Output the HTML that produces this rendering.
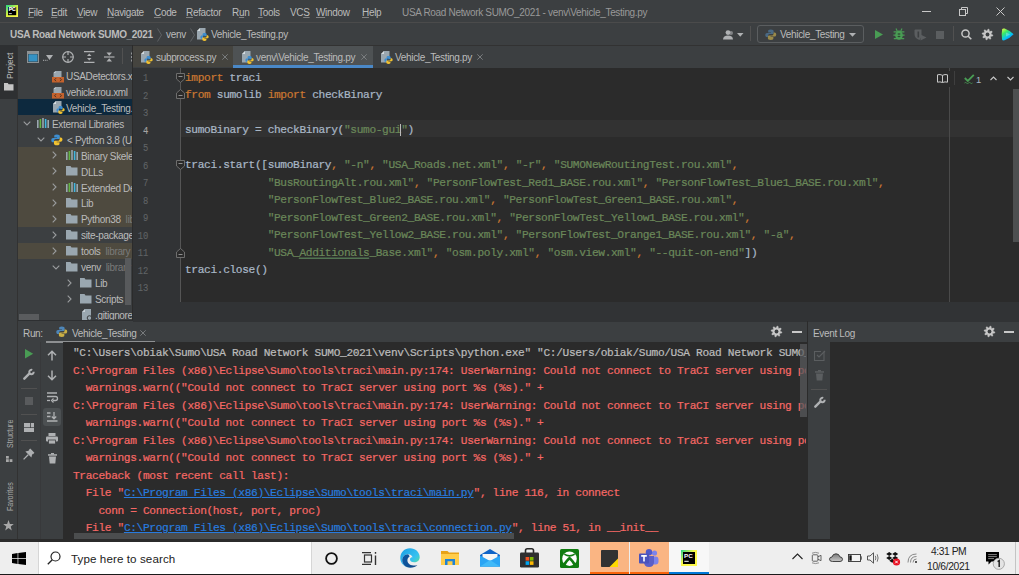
<!DOCTYPE html>
<html><head><meta charset="utf-8"><style>
*{box-sizing:border-box}
html,body{margin:0;padding:0}
body{width:1019px;height:575px;overflow:hidden;position:relative;background:#3C3F41;font-family:"Liberation Sans",sans-serif;}
.a{position:absolute}
svg.a{overflow:visible}
.t{position:absolute;white-space:pre;line-height:10px}
.ui{font-size:10px;color:#BBBBBB;font-family:"Liberation Sans",sans-serif;letter-spacing:-0.33px}
.m{font-family:"Liberation Mono",monospace;font-size:11.2px;letter-spacing:-0.356px;white-space:pre;-webkit-text-stroke:0.22px currentColor}
.k{color:#CC7832}
.s{color:#6A8759}
.d{color:#A9B7C6}
.er{color:#F56865}
.lk{color:#287BDE;text-decoration:underline}
u{text-decoration:underline;text-decoration-color:rgba(187,187,187,0.55);text-underline-offset:1px}
</style></head><body>
<div class="a" style="left:0px;top:22px;width:1019px;height:1px;background:#4B4B4B;"></div>
<svg class="a" style="left:6px;top:5px;" width="12" height="12" viewBox="0 0 12 12"><defs><linearGradient id="pcg" x1="0" y1="0" x2="0.8" y2="1"><stop offset="0" stop-color="#21D789"/><stop offset="0.55" stop-color="#D8F03C"/><stop offset="1" stop-color="#FCF84A"/></linearGradient></defs><rect x="0" y="0" width="12" height="12" fill="url(#pcg)"/><rect x="2" y="2" width="8.2" height="8.2" fill="#000"/><text x="2.7" y="6.3" font-family="Liberation Sans" font-weight="bold" font-size="5" fill="#fff" stroke="#fff" stroke-width="0.2">PC</text><rect x="2.8" y="8.3" width="3" height="0.8" fill="#fff"/></svg>
<div class="t ui" style="left:28px;top:8px;"><u>F</u>ile</div>
<div class="t ui" style="left:51px;top:8px;"><u>E</u>dit</div>
<div class="t ui" style="left:77px;top:8px;"><u>V</u>iew</div>
<div class="t ui" style="left:107px;top:8px;"><u>N</u>avigate</div>
<div class="t ui" style="left:154px;top:8px;"><u>C</u>ode</div>
<div class="t ui" style="left:186px;top:8px;"><u>R</u>efactor</div>
<div class="t ui" style="left:232px;top:8px;">R<u>u</u>n</div>
<div class="t ui" style="left:258px;top:8px;"><u>T</u>ools</div>
<div class="t ui" style="left:290px;top:8px;">VC<u>S</u></div>
<div class="t ui" style="left:316px;top:8px;"><u>W</u>indow</div>
<div class="t ui" style="left:362px;top:8px;"><u>H</u>elp</div>
<div class="t ui" style="left:402px;top:8px;color:#999999">USA Road Network SUMO_2021 - venv\Vehicle_Testing.py</div>
<div class="a" style="left:922px;top:11px;width:9px;height:1px;background:#C8C8C8;"></div>
<svg class="a" style="left:959px;top:7px;" width="9" height="9" viewBox="0 0 9 9"><rect x="0.5" y="2.5" width="6" height="6" fill="none" stroke="#C8C8C8"/><path d="M2.5 2.5V0.5H8.5V6.5H6.5" fill="none" stroke="#C8C8C8"/></svg>
<svg class="a" style="left:996px;top:7px;" width="9" height="9" viewBox="0 0 9 9"><path d="M0.5 0.5L8.5 8.5M8.5 0.5L0.5 8.5" stroke="#C8C8C8" stroke-width="1"/></svg>
<div class="t ui" style="left:10px;top:30px;font-weight:bold">USA Road Network SUMO_2021</div>
<svg class="a" style="left:157px;top:28px;" width="5" height="14" viewBox="0 0 5 14"><path d="M0.5 0.5L4.5 7L0.5 13.5" stroke="#5E6164" fill="none"/></svg>
<div class="t ui" style="left:166px;top:30px;">venv</div>
<svg class="a" style="left:190px;top:28px;" width="5" height="14" viewBox="0 0 5 14"><path d="M0.5 0.5L4.5 7L0.5 13.5" stroke="#5E6164" fill="none"/></svg>
<svg class="a" style="left:197px;top:28px;" width="12" height="13" viewBox="0 0 12 13"><path d="M3 0H8.5V6H6V11.5H0V3Z" fill="#9AA7B0"/><path d="M0 3L3 0V3Z" fill="#D5DCE0"/><g transform="translate(3.2,4.6) scale(0.72)"><path d="M6 0.5C3.6 0.5 3.3 1.3 3.3 2.3V3.6H6.2V4.1H2.1C1 4.1 0.3 5 0.3 6.3C0.3 7.7 1 8.4 2.1 8.4H3.1V7C3.1 5.9 4 5.1 5 5.1H7.7C8.5 5.1 9 4.6 9 3.8V2.3C9 1.3 8.2 0.5 6 0.5Z" fill="#3D8ED0"/><path d="M6 11.5C8.4 11.5 8.7 10.7 8.7 9.7V8.4H5.8V7.9H9.9C11 7.9 11.7 7 11.7 5.7C11.7 4.3 11 3.6 9.9 3.6H8.9V5C8.9 6.1 8 6.9 7 6.9H4.3C3.5 6.9 3 7.4 3 8.2V9.7C3 10.7 3.8 11.5 6 11.5Z" fill="#F2C230"/></g></svg>
<div class="t ui" style="left:211px;top:30px;">Vehicle_Testing.py</div>
<svg class="a" style="left:723px;top:30px;" width="12" height="10" viewBox="0 0 12 10"><circle cx="5" cy="2.6" r="2.4" fill="#AFB1B3"/><path d="M0 9.5C0 6.5 2 5.4 5 5.4C8 5.4 10 6.5 10 9.5Z" fill="#AFB1B3"/><circle cx="8" cy="3" r="2" fill="#AFB1B3" opacity="0.6"/></svg>
<svg class="a" style="left:737px;top:33px;" width="7" height="4" viewBox="0 0 7 4"><path d="M0 0H6.5L3.25 3.7Z" fill="#AFB1B3"/></svg>
<div class="a" style="left:750px;top:26px;width:1px;height:15px;background:#515151;"></div>
<div class="a" style="left:757px;top:25px;width:107px;height:18px;border:1px solid #5B5E60;border-radius:3px"></div>
<svg class="a" style="left:765px;top:29px;" width="12" height="12" viewBox="0 0 12 12"><g transform="scale(0.96)"><path d="M6 0.5C3.6 0.5 3.3 1.3 3.3 2.3V3.6H6.2V4.1H2.1C1 4.1 0.3 5 0.3 6.3C0.3 7.7 1 8.4 2.1 8.4H3.1V7C3.1 5.9 4 5.1 5 5.1H7.7C8.5 5.1 9 4.6 9 3.8V2.3C9 1.3 8.2 0.5 6 0.5Z" fill="#4A6A85"/><path d="M6 11.5C8.4 11.5 8.7 10.7 8.7 9.7V8.4H5.8V7.9H9.9C11 7.9 11.7 7 11.7 5.7C11.7 4.3 11 3.6 9.9 3.6H8.9V5C8.9 6.1 8 6.9 7 6.9H4.3C3.5 6.9 3 7.4 3 8.2V9.7C3 10.7 3.8 11.5 6 11.5Z" fill="#9A8A4A"/></g></svg>
<div class="t ui" style="left:780px;top:30px;">Vehicle_Testing</div>
<svg class="a" style="left:849px;top:33px;" width="7" height="4" viewBox="0 0 7 4"><path d="M0 0H7L3.5 3.8Z" fill="#AFB1B3"/></svg>
<svg class="a" style="left:875px;top:30px;" width="8" height="9" viewBox="0 0 8 9"><path d="M0 0L8 4.5L0 9Z" fill="#499C54"/></svg>
<svg class="a" style="left:893px;top:28px;" width="12" height="13" viewBox="0 0 12 13"><path d="M4.2 3L3 0.6M7.8 3L9 0.6" stroke="#499C54" stroke-width="1.2"/><path d="M0.6 3.8H11.4M0.4 7.2H11.6M0.8 10.6H11.2" stroke="#499C54" stroke-width="1.3"/><ellipse cx="6" cy="7.2" rx="3.8" ry="4.6" fill="#499C54"/><ellipse cx="6" cy="6" rx="1.5" ry="0.75" fill="#2F4A33"/><ellipse cx="6" cy="8.6" rx="1.5" ry="0.75" fill="#2F4A33"/></svg>
<svg class="a" style="left:914px;top:29px;" width="13" height="12" viewBox="0 0 13 12"><path d="M1.5 0.5H7.5V7.5L5.5 11Q0.5 9.5 0.5 5V1.5Q0.5 0.5 1.5 0.5Z" fill="#5B5E60"/><rect x="3.5" y="2.5" width="1.6" height="6" fill="#3C3F41"/><path d="M6.5 5.5L12.5 8.5L6.5 11.5Z" fill="#5B5E60"/></svg>
<div class="a" style="left:936px;top:31px;width:8px;height:8px;background:#5B5E60;"></div>
<div class="a" style="left:953px;top:26px;width:1px;height:15px;background:#515151;"></div>
<svg class="a" style="left:961px;top:29px;" width="11" height="11" viewBox="0 0 11 11"><circle cx="4.5" cy="4.5" r="3.6" stroke="#C8C8C8" stroke-width="1.5" fill="none"/><path d="M7.2 7.2L10.3 10.3" stroke="#C8C8C8" stroke-width="1.6"/></svg>
<svg class="a" style="left:982px;top:29px;" width="11" height="11" viewBox="0 0 11 11"><polygon points="10.87,6.03 10.67,7.07 8.83,7.28 8.42,7.90 8.93,9.67 8.05,10.26 6.60,9.12 5.87,9.26 4.97,10.87 3.93,10.67 3.72,8.83 3.10,8.42 1.33,8.93 0.74,8.05 1.88,6.60 1.74,5.87 0.13,4.97 0.33,3.93 2.17,3.72 2.58,3.10 2.07,1.33 2.95,0.74 4.40,1.88 5.13,1.74 6.03,0.13 7.07,0.33 7.28,2.17 7.90,2.58 9.67,2.07 10.26,2.95 9.12,4.40 9.26,5.13" fill="#C8C8C8" stroke="#C8C8C8" stroke-width="0.5" stroke-linejoin="round"/><circle cx="5.5" cy="5.5" r="1.9" fill="#3C3F41"/></svg>
<svg class="a" style="left:1001px;top:28px;" width="13" height="13" viewBox="0 0 13 13"><defs><linearGradient id="jbg" x1="0" y1="0" x2="0.7" y2="1"><stop offset="0" stop-color="#FCF84A"/><stop offset="0.35" stop-color="#3DEA62"/><stop offset="0.7" stop-color="#07C3F2"/><stop offset="1" stop-color="#087CFA"/></linearGradient></defs><path d="M1.2 1.6Q1.6 0 3.6 0.6Q9 2.6 12.6 6.3Q9 10.4 3.6 12.3Q1.4 12.9 1 11.2Q0.2 6.4 1.2 1.6Z" fill="url(#jbg)"/><path d="M5 4.6L9.2 6.4L5 8.4Z" fill="#DFFBFF" opacity="0.3"/></svg>
<div class="a" style="left:0px;top:45px;width:17px;height:494px;background:#3C3F41;"></div>
<div class="a" style="left:0px;top:45px;width:17px;height:54px;background:#2E3032;"></div>
<div class="a" style="left:17px;top:45px;width:1px;height:494px;background:#323232;"></div>
<div class="t ui" style="left:4.5px;top:79px;transform-origin:0 0;transform:rotate(-90deg);font-size:8.5px;letter-spacing:0px;color:#BBBBBB">Project</div>
<svg class="a" style="left:4px;top:83px;" width="10" height="8" viewBox="0 0 10 8"><path d="M0 0H3.8L4.6 1.2H9.5V7.5H0Z" fill="#C5C5C5"/></svg>
<div class="t ui" style="left:4.5px;top:448px;transform-origin:0 0;transform:rotate(-90deg) scaleX(0.82);font-size:8.5px;letter-spacing:0px;color:#A8A8A8">Structure</div>
<svg class="a" style="left:6px;top:456px;" width="7" height="6" viewBox="0 0 7 6"><rect x="0" y="3.2" width="2.8" height="2.8" fill="#A8A8A8"/><rect x="3.6" y="3.2" width="2.8" height="2.8" fill="#A8A8A8"/><rect x="0" y="0" width="2.8" height="2.6" fill="#A8A8A8"/></svg>
<div class="t ui" style="left:4.5px;top:511px;transform-origin:0 0;transform:rotate(-90deg) scaleX(0.82);font-size:8.5px;letter-spacing:0px;color:#A8A8A8">Favorites</div>
<svg class="a" style="left:3px;top:520px;" width="11" height="11" viewBox="0 0 11 11"><path d="M5.5 0L6.9 3.9L10.8 4L7.7 6.5L8.8 10.4L5.5 8.1L2.2 10.4L3.3 6.5L0.2 4L4.1 3.9Z" fill="#A8A8A8"/></svg>
<div class="a" style="left:18px;top:45px;width:114px;height:1px;background:#323232;"></div>
<div class="a" style="left:132px;top:45px;width:1px;height:276px;background:#2B2B2B;"></div>
<div class="a" style="left:18px;top:46px;width:114px;height:275px;overflow:hidden"><div class="a" style="left:-18px;top:-46px;width:1019px;height:575px">
<svg class="a" style="left:27px;top:51px;" width="13" height="12" viewBox="0 0 13 12"><rect x="0.5" y="0.5" width="11" height="11" fill="none" stroke="#8C9194"/><rect x="1" y="1" width="10" height="2" fill="#8C9194"/><rect x="1.5" y="3.3" width="9" height="7.2" fill="#3592C4"/></svg>
<svg class="a" style="left:43px;top:55px;" width="10" height="6" viewBox="0 0 10 6"><path d="M3 0H10L6.5 5Z" fill="#AFB1B3"/><rect x="0" y="4.8" width="1" height="1" fill="#AFB1B3"/><rect x="1.8" y="4.8" width="1" height="1" fill="#AFB1B3"/><rect x="3.6" y="4.8" width="1" height="1" fill="#AFB1B3"/></svg>
<svg class="a" style="left:62px;top:51px;" width="12" height="12" viewBox="0 0 12 12"><circle cx="6" cy="6" r="5.3" stroke="#AFB1B3" stroke-width="1.2" fill="none"/><path d="M6 0.5V4M6 8V11.5M0.5 6H4M8 6H11.5" stroke="#AFB1B3" stroke-width="1.2"/></svg>
<svg class="a" style="left:84px;top:51px;" width="11" height="12" viewBox="0 0 11 12"><path d="M0 0.6H10.5M0 11.4H10.5" stroke="#AFB1B3" stroke-width="1.2"/><path d="M5.25 2.5L7.5 5H3Z M5.25 9.5L7.5 7H3Z" fill="#AFB1B3"/></svg>
<svg class="a" style="left:104px;top:52px;" width="11" height="10" viewBox="0 0 11 10"><path d="M0 5H10.5" stroke="#AFB1B3" stroke-width="1.2"/><path d="M5.25 3.8L8 0.6H2.5Z M5.25 6.2L8 9.4H2.5Z" fill="#AFB1B3"/></svg>
<div class="a" style="left:122px;top:48px;width:1px;height:16px;background:#515151;"></div>
<svg class="a" style="left:129px;top:52px;" width="4" height="10" viewBox="0 0 4 10"><path d="M3 0.5V9.5" stroke="#AFB1B3" stroke-width="1.5" stroke-dasharray="2 1.5"/></svg>
<div class="a" style="left:18px;top:99px;width:114px;height:16px;background:#0D293E;"></div>
<div class="a" style="left:18px;top:147px;width:114px;height:80px;background:#4E4A3F;"></div>
<div class="a" style="left:18px;top:243px;width:114px;height:16px;background:#4E4A3F;"></div>
<svg class="a" style="left:52px;top:71px;" width="12" height="12" viewBox="0 0 12 12"><path d="M3.5 0H9.5V6H1.5V2Z" fill="#9AA7B0"/><path d="M1.5 2L3.5 0V2Z" fill="#C8D0D6"/><rect x="0" y="6" width="12" height="5.5" fill="#C4622D"/><path d="M4 7.2L2.6 8.7L4 10.2M8 7.2L9.4 8.7L8 10.2" stroke="#3A2A20" stroke-width="0.9" fill="none"/></svg>
<div class="t ui" style="left:66px;top:72px;">USADetectors.xml</div>
<svg class="a" style="left:52px;top:87px;" width="12" height="12" viewBox="0 0 12 12"><path d="M3.5 0H9.5V6H1.5V2Z" fill="#9AA7B0"/><path d="M1.5 2L3.5 0V2Z" fill="#C8D0D6"/><rect x="0" y="6" width="12" height="5.5" fill="#C4622D"/><path d="M4 7.2L2.6 8.7L4 10.2M8 7.2L9.4 8.7L8 10.2" stroke="#3A2A20" stroke-width="0.9" fill="none"/></svg>
<div class="t ui" style="left:66px;top:88px;">vehicle.rou.xml</div>
<svg class="a" style="left:53px;top:101px;" width="12" height="13" viewBox="0 0 12 13"><path d="M3 0H8.5V6H6V11.5H0V3Z" fill="#9AA7B0"/><path d="M0 3L3 0V3Z" fill="#D5DCE0"/><g transform="translate(3.2,4.6) scale(0.72)"><path d="M6 0.5C3.6 0.5 3.3 1.3 3.3 2.3V3.6H6.2V4.1H2.1C1 4.1 0.3 5 0.3 6.3C0.3 7.7 1 8.4 2.1 8.4H3.1V7C3.1 5.9 4 5.1 5 5.1H7.7C8.5 5.1 9 4.6 9 3.8V2.3C9 1.3 8.2 0.5 6 0.5Z" fill="#3D8ED0"/><path d="M6 11.5C8.4 11.5 8.7 10.7 8.7 9.7V8.4H5.8V7.9H9.9C11 7.9 11.7 7 11.7 5.7C11.7 4.3 11 3.6 9.9 3.6H8.9V5C8.9 6.1 8 6.9 7 6.9H4.3C3.5 6.9 3 7.4 3 8.2V9.7C3 10.7 3.8 11.5 6 11.5Z" fill="#F2C230"/></g></svg>
<div class="t ui" style="left:66px;top:104px;">Vehicle_Testing.py</div>
<svg class="a" style="left:23px;top:121px;" width="8" height="5" viewBox="0 0 8 5"><path d="M0.7 0.7L4 4L7.3 0.7" stroke="#9A9C9E" stroke-width="1.1" fill="none"/></svg>
<svg class="a" style="left:37px;top:118px;" width="12" height="10" viewBox="0 0 12 10"><rect x="0" y="2" width="1.6" height="8" fill="#9AA7B0"/><rect x="2.6" y="1" width="1.6" height="9" fill="#62B543"/><rect x="5.2" y="0" width="1.6" height="10" fill="#9AA7B0"/><rect x="7.8" y="1" width="1.6" height="9" fill="#40B6E0"/><rect x="10.4" y="2" width="1.6" height="8" fill="#9AA7B0"/></svg>
<div class="t ui" style="left:52px;top:120px;">External Libraries</div>
<svg class="a" style="left:37px;top:137px;" width="8" height="5" viewBox="0 0 8 5"><path d="M0.7 0.7L4 4L7.3 0.7" stroke="#9A9C9E" stroke-width="1.1" fill="none"/></svg>
<svg class="a" style="left:51px;top:134px;" width="12" height="12" viewBox="0 0 12 12"><g transform="scale(0.98)"><path d="M6 0.5C3.6 0.5 3.3 1.3 3.3 2.3V3.6H6.2V4.1H2.1C1 4.1 0.3 5 0.3 6.3C0.3 7.7 1 8.4 2.1 8.4H3.1V7C3.1 5.9 4 5.1 5 5.1H7.7C8.5 5.1 9 4.6 9 3.8V2.3C9 1.3 8.2 0.5 6 0.5Z" fill="#3D8ED0"/><path d="M6 11.5C8.4 11.5 8.7 10.7 8.7 9.7V8.4H5.8V7.9H9.9C11 7.9 11.7 7 11.7 5.7C11.7 4.3 11 3.6 9.9 3.6H8.9V5C8.9 6.1 8 6.9 7 6.9H4.3C3.5 6.9 3 7.4 3 8.2V9.7C3 10.7 3.8 11.5 6 11.5Z" fill="#F2C230"/></g></svg>
<div class="t ui" style="left:67px;top:136px;">&lt; Python 3.8 (USA Road Network)</div>
<svg class="a" style="left:52px;top:151px;" width="5" height="8" viewBox="0 0 5 8"><path d="M0.7 0.7L4 4L0.7 7.3" stroke="#9A9C9E" stroke-width="1.1" fill="none"/></svg>
<svg class="a" style="left:66px;top:150px;" width="12" height="10" viewBox="0 0 12 10"><rect x="0" y="2" width="1.6" height="8" fill="#9AA7B0"/><rect x="2.6" y="1" width="1.6" height="9" fill="#62B543"/><rect x="5.2" y="0" width="1.6" height="10" fill="#9AA7B0"/><rect x="7.8" y="1" width="1.6" height="9" fill="#40B6E0"/><rect x="10.4" y="2" width="1.6" height="8" fill="#9AA7B0"/></svg>
<div class="t ui" style="left:81px;top:152px;">Binary Skeletons</div>
<svg class="a" style="left:52px;top:167px;" width="5" height="8" viewBox="0 0 5 8"><path d="M0.7 0.7L4 4L0.7 7.3" stroke="#9A9C9E" stroke-width="1.1" fill="none"/></svg>
<svg class="a" style="left:66px;top:166px;" width="12" height="10" viewBox="0 0 12 10"><path d="M0 0H4.5L5.5 1.5H11.5V9.5H0Z" fill="#9AA7B0"/></svg>
<div class="t ui" style="left:81px;top:168px;">DLLs</div>
<svg class="a" style="left:52px;top:183px;" width="5" height="8" viewBox="0 0 5 8"><path d="M0.7 0.7L4 4L0.7 7.3" stroke="#9A9C9E" stroke-width="1.1" fill="none"/></svg>
<svg class="a" style="left:66px;top:182px;" width="12" height="10" viewBox="0 0 12 10"><rect x="0" y="2" width="1.6" height="8" fill="#9AA7B0"/><rect x="2.6" y="1" width="1.6" height="9" fill="#62B543"/><rect x="5.2" y="0" width="1.6" height="10" fill="#9AA7B0"/><rect x="7.8" y="1" width="1.6" height="9" fill="#40B6E0"/><rect x="10.4" y="2" width="1.6" height="8" fill="#9AA7B0"/></svg>
<div class="t ui" style="left:81px;top:184px;">Extended Definitions</div>
<svg class="a" style="left:52px;top:199px;" width="5" height="8" viewBox="0 0 5 8"><path d="M0.7 0.7L4 4L0.7 7.3" stroke="#9A9C9E" stroke-width="1.1" fill="none"/></svg>
<svg class="a" style="left:66px;top:198px;" width="12" height="10" viewBox="0 0 12 10"><path d="M0 0H4.5L5.5 1.5H11.5V9.5H0Z" fill="#9AA7B0"/></svg>
<div class="t ui" style="left:81px;top:199.4px;">Lib</div>
<svg class="a" style="left:52px;top:215px;" width="5" height="8" viewBox="0 0 5 8"><path d="M0.7 0.7L4 4L0.7 7.3" stroke="#9A9C9E" stroke-width="1.1" fill="none"/></svg>
<svg class="a" style="left:66px;top:214px;" width="12" height="10" viewBox="0 0 12 10"><path d="M0 0H4.5L5.5 1.5H11.5V9.5H0Z" fill="#9AA7B0"/></svg>
<div class="t ui" style="left:81px;top:215.4px;">Python38  <span style="color:#7A7A7A">library root</span></div>
<svg class="a" style="left:52px;top:231px;" width="5" height="8" viewBox="0 0 5 8"><path d="M0.7 0.7L4 4L0.7 7.3" stroke="#9A9C9E" stroke-width="1.1" fill="none"/></svg>
<svg class="a" style="left:66px;top:230px;" width="12" height="10" viewBox="0 0 12 10"><path d="M0 0H4.5L5.5 1.5H11.5V9.5H0Z" fill="#9AA7B0"/></svg>
<div class="t ui" style="left:81px;top:231.4px;">site-packages</div>
<svg class="a" style="left:52px;top:247px;" width="5" height="8" viewBox="0 0 5 8"><path d="M0.7 0.7L4 4L0.7 7.3" stroke="#9A9C9E" stroke-width="1.1" fill="none"/></svg>
<svg class="a" style="left:66px;top:246px;" width="12" height="10" viewBox="0 0 12 10"><path d="M0 0H4.5L5.5 1.5H11.5V9.5H0Z" fill="#9AA7B0"/></svg>
<div class="t ui" style="left:81px;top:247.4px;">tools  <span style="color:#7A7A7A">library root</span></div>
<svg class="a" style="left:52px;top:265px;" width="8" height="5" viewBox="0 0 8 5"><path d="M0.7 0.7L4 4L7.3 0.7" stroke="#9A9C9E" stroke-width="1.1" fill="none"/></svg>
<svg class="a" style="left:66px;top:262px;" width="12" height="10" viewBox="0 0 12 10"><path d="M0 0H4.5L5.5 1.5H11.5V9.5H0Z" fill="#9AA7B0"/></svg>
<div class="t ui" style="left:81px;top:263.4px;">venv  <span style="color:#7A7A7A">library root</span></div>
<svg class="a" style="left:67px;top:279px;" width="5" height="8" viewBox="0 0 5 8"><path d="M0.7 0.7L4 4L0.7 7.3" stroke="#9A9C9E" stroke-width="1.1" fill="none"/></svg>
<svg class="a" style="left:80px;top:278px;" width="12" height="10" viewBox="0 0 12 10"><path d="M0 0H4.5L5.5 1.5H11.5V9.5H0Z" fill="#9AA7B0"/></svg>
<div class="t ui" style="left:95px;top:279.4px;">Lib</div>
<svg class="a" style="left:67px;top:295px;" width="5" height="8" viewBox="0 0 5 8"><path d="M0.7 0.7L4 4L0.7 7.3" stroke="#9A9C9E" stroke-width="1.1" fill="none"/></svg>
<svg class="a" style="left:80px;top:294px;" width="12" height="10" viewBox="0 0 12 10"><path d="M0 0H4.5L5.5 1.5H11.5V9.5H0Z" fill="#9AA7B0"/></svg>
<div class="t ui" style="left:95px;top:295.4px;">Scripts</div>
<svg class="a" style="left:82px;top:309px;" width="11" height="12" viewBox="0 0 11 12"><path d="M3 0H9V11H0V3Z" fill="#9AA7B0"/><path d="M0 3L3 0V3Z" fill="#C8D0D6"/><circle cx="7.5" cy="9" r="2.3" fill="none" stroke="#3C3F41" stroke-width="1"/></svg>
<div class="t ui" style="left:95px;top:311.4px;">.gitignore</div>
<div class="a" style="left:125px;top:258px;width:6px;height:47px;background:#585A5C;"></div>
<div class="a" style="left:19px;top:314px;width:20px;height:6px;background:#5A5C5E;"></div>
</div></div>
<div class="a" style="left:133px;top:45px;width:886px;height:1px;background:#323232;"></div>
<div class="a" style="left:133px;top:46px;width:100px;height:21px;background:#45443F;"></div>
<div class="a" style="left:233px;top:46px;width:140px;height:22px;background:#4E5254;"></div>
<div class="a" style="left:233px;top:65px;width:140px;height:3px;background:#4A88C7;"></div>
<svg class="a" style="left:141px;top:51px;" width="12" height="13" viewBox="0 0 12 13"><path d="M3 0H8.5V6H6V11.5H0V3Z" fill="#9AA7B0"/><path d="M0 3L3 0V3Z" fill="#D5DCE0"/><g transform="translate(3.2,4.6) scale(0.72)"><path d="M6 0.5C3.6 0.5 3.3 1.3 3.3 2.3V3.6H6.2V4.1H2.1C1 4.1 0.3 5 0.3 6.3C0.3 7.7 1 8.4 2.1 8.4H3.1V7C3.1 5.9 4 5.1 5 5.1H7.7C8.5 5.1 9 4.6 9 3.8V2.3C9 1.3 8.2 0.5 6 0.5Z" fill="#3D8ED0"/><path d="M6 11.5C8.4 11.5 8.7 10.7 8.7 9.7V8.4H5.8V7.9H9.9C11 7.9 11.7 7 11.7 5.7C11.7 4.3 11 3.6 9.9 3.6H8.9V5C8.9 6.1 8 6.9 7 6.9H4.3C3.5 6.9 3 7.4 3 8.2V9.7C3 10.7 3.8 11.5 6 11.5Z" fill="#F2C230"/></g></svg>
<div class="t ui" style="left:156px;top:53px;">subprocess.py</div>
<svg class="a" style="left:222px;top:54px;" width="6" height="6" viewBox="0 0 6 6"><path d="M0.3 0.3L5.7 5.7M5.7 0.3L0.3 5.7" stroke="#7F8285" stroke-width="0.9"/></svg>
<svg class="a" style="left:242px;top:51px;" width="12" height="13" viewBox="0 0 12 13"><path d="M3 0H8.5V6H6V11.5H0V3Z" fill="#9AA7B0"/><path d="M0 3L3 0V3Z" fill="#D5DCE0"/><g transform="translate(3.2,4.6) scale(0.72)"><path d="M6 0.5C3.6 0.5 3.3 1.3 3.3 2.3V3.6H6.2V4.1H2.1C1 4.1 0.3 5 0.3 6.3C0.3 7.7 1 8.4 2.1 8.4H3.1V7C3.1 5.9 4 5.1 5 5.1H7.7C8.5 5.1 9 4.6 9 3.8V2.3C9 1.3 8.2 0.5 6 0.5Z" fill="#3D8ED0"/><path d="M6 11.5C8.4 11.5 8.7 10.7 8.7 9.7V8.4H5.8V7.9H9.9C11 7.9 11.7 7 11.7 5.7C11.7 4.3 11 3.6 9.9 3.6H8.9V5C8.9 6.1 8 6.9 7 6.9H4.3C3.5 6.9 3 7.4 3 8.2V9.7C3 10.7 3.8 11.5 6 11.5Z" fill="#F2C230"/></g></svg>
<div class="t ui" style="left:256px;top:53px;">venv\Vehicle_Testing.py</div>
<svg class="a" style="left:361px;top:54px;" width="6" height="6" viewBox="0 0 6 6"><path d="M0.3 0.3L5.7 5.7M5.7 0.3L0.3 5.7" stroke="#7F8285" stroke-width="0.9"/></svg>
<svg class="a" style="left:381px;top:51px;" width="12" height="13" viewBox="0 0 12 13"><path d="M3 0H8.5V6H6V11.5H0V3Z" fill="#9AA7B0"/><path d="M0 3L3 0V3Z" fill="#D5DCE0"/><g transform="translate(3.2,4.6) scale(0.72)"><path d="M6 0.5C3.6 0.5 3.3 1.3 3.3 2.3V3.6H6.2V4.1H2.1C1 4.1 0.3 5 0.3 6.3C0.3 7.7 1 8.4 2.1 8.4H3.1V7C3.1 5.9 4 5.1 5 5.1H7.7C8.5 5.1 9 4.6 9 3.8V2.3C9 1.3 8.2 0.5 6 0.5Z" fill="#3D8ED0"/><path d="M6 11.5C8.4 11.5 8.7 10.7 8.7 9.7V8.4H5.8V7.9H9.9C11 7.9 11.7 7 11.7 5.7C11.7 4.3 11 3.6 9.9 3.6H8.9V5C8.9 6.1 8 6.9 7 6.9H4.3C3.5 6.9 3 7.4 3 8.2V9.7C3 10.7 3.8 11.5 6 11.5Z" fill="#F2C230"/></g></svg>
<div class="t ui" style="left:395px;top:53px;">Vehicle_Testing.py</div>
<svg class="a" style="left:477px;top:54px;" width="6" height="6" viewBox="0 0 6 6"><path d="M0.3 0.3L5.7 5.7M5.7 0.3L0.3 5.7" stroke="#7F8285" stroke-width="0.9"/></svg>
<div class="a" style="left:133px;top:68px;width:886px;height:234px;background:#2B2B2B;"></div>
<div class="a" style="left:133px;top:68px;width:47px;height:234px;background:#313335;"></div>
<div class="a" style="left:181px;top:120px;width:832px;height:17px;background:#323232;"></div>
<div class="a" style="left:180px;top:68px;width:1px;height:234px;background:#555555;"></div>
<svg class="a" style="left:176px;top:73px;" width="9" height="10" viewBox="0 0 9 10"><path d="M0.5 0.5H8.5V6L4.5 9.5L0.5 6Z" fill="#2B2B2B" stroke="#6E6E6E"/><path d="M2.5 3.5H6.5" stroke="#8E8E8E"/></svg>
<svg class="a" style="left:176px;top:89px;" width="9" height="10" viewBox="0 0 9 10"><path d="M0.5 9.5H8.5V4L4.5 0.5L0.5 4Z" fill="#2B2B2B" stroke="#6E6E6E"/><path d="M2.5 6.5H6.5" stroke="#8E8E8E"/></svg>
<svg class="a" style="left:176px;top:160px;" width="9" height="10" viewBox="0 0 9 10"><path d="M0.5 0.5H8.5V6L4.5 9.5L0.5 6Z" fill="#2B2B2B" stroke="#6E6E6E"/><path d="M2.5 3.5H6.5" stroke="#8E8E8E"/></svg>
<svg class="a" style="left:176px;top:248px;" width="9" height="10" viewBox="0 0 9 10"><path d="M0.5 9.5H8.5V4L4.5 0.5L0.5 4Z" fill="#2B2B2B" stroke="#6E6E6E"/><path d="M2.5 6.5H6.5" stroke="#8E8E8E"/></svg>
<div class="a" style="left:949px;top:87px;width:1px;height:215px;background:#4A4A4A;"></div>
<div class="a" style="left:949px;top:68px;width:1px;height:3px;background:#4A4A4A;"></div>
<div class="a" style="left:1013px;top:89px;width:6px;height:153px;background:#4D4F50;"></div>
<svg class="a" style="left:937px;top:74px;" width="11" height="9" viewBox="0 0 11 9"><path d="M0.5 0.8Q3 0 5.5 1.3Q8 0 10.5 0.8V8.2Q8 7.4 5.5 8.5Q3 7.4 0.5 8.2Z M5.5 1.3V8.5" fill="none" stroke="#C8C8C8" stroke-width="1"/></svg>
<div class="a" style="left:954px;top:71px;width:1px;height:14px;background:#3F3F3F;"></div>
<svg class="a" style="left:964px;top:74px;" width="11" height="10" viewBox="0 0 11 10"><path d="M0.8 4L3.8 7L9.8 0.8" stroke="#499C54" stroke-width="1.8" fill="none"/><path d="M0.5 9Q1.5 8 2.5 9Q3.5 10 4.5 9Q5.5 8 6.5 9Q7.5 10 8.5 9" stroke="#499C54" stroke-width="0.8" fill="none"/></svg>
<div class="t ui" style="left:976px;top:75px;color:#A9B7C6;font-size:9.5px">1</div>
<svg class="a" style="left:990px;top:76px;" width="7" height="5" viewBox="0 0 7 5"><path d="M0.5 4L3.5 1L6.5 4" stroke="#C8C8C8" stroke-width="1.1" fill="none"/></svg>
<svg class="a" style="left:1007px;top:76px;" width="7" height="5" viewBox="0 0 7 5"><path d="M0.5 1L3.5 4L6.5 1" stroke="#C8C8C8" stroke-width="1.1" fill="none"/></svg>
<div class="m" style="position:absolute;left:133px;top:70px;width:15.5px;line-height:17.5px;font-size:10.8px;text-align:right;color:#606366;letter-spacing:0.1px;-webkit-text-stroke:0.1px currentColor;transform:scaleX(0.82);transform-origin:100% 0"><div style="height:17.5px">1</div><div style="height:17.5px">2</div><div style="height:17.5px">3</div><div style="height:17.5px"><span style='color:#A4A3A3'>4</span></div><div style="height:17.5px">5</div><div style="height:17.5px">6</div><div style="height:17.5px">7</div><div style="height:17.5px">8</div><div style="height:17.5px">9</div><div style="height:17.5px">10</div><div style="height:17.5px">11</div><div style="height:17.5px">12</div><div style="height:17.5px">13</div></div>
<div class="m d" style="position:absolute;left:185px;top:69.5px;line-height:17.5px"><span class="k">import</span> traci
<span class="k">from</span> sumolib <span class="k">import</span> checkBinary

sumoBinary = checkBinary(<span class="s">"sumo-gui"</span>)

traci.start([sumoBinary<span class="k">,</span> <span class="s">"-n"</span><span class="k">,</span> <span class="s">"USA_Roads.net.xml"</span><span class="k">,</span> <span class="s">"-r"</span><span class="k">,</span> <span class="s">"SUMONewRoutingTest.rou.xml"</span><span class="k">,</span>
             <span class="s">"BusRoutingAlt.rou.xml"</span><span class="k">,</span> <span class="s">"PersonFlowTest_Red1_BASE.rou.xml"</span><span class="k">,</span> <span class="s">"PersonFlowTest_Blue1_BASE.rou.xml"</span><span class="k">,</span>
             <span class="s">"PersonFlowTest_Blue2_BASE.rou.xml"</span><span class="k">,</span> <span class="s">"PersonFlowTest_Green1_BASE.rou.xml"</span><span class="k">,</span>
             <span class="s">"PersonFlowTest_Green2_BASE.rou.xml"</span><span class="k">,</span> <span class="s">"PersonFlowTest_Yellow1_BASE.rou.xml"</span><span class="k">,</span>
             <span class="s">"PersonFlowTest_Yellow2_BASE.rou.xml"</span><span class="k">,</span> <span class="s">"PersonFlowTest_Orange1_BASE.rou.xml"</span><span class="k">,</span> <span class="s">"-a"</span><span class="k">,</span>
             <span class="s">"USA_Additionals_Base.xml"</span><span class="k">,</span> <span class="s">"osm.poly.xml"</span><span class="k">,</span> <span class="s">"osm.view.xml"</span><span class="k">,</span> <span class="s">"--quit-on-end"</span>])
traci.close()
</div>
<svg class="a" style="left:299px;top:257px;" width="71" height="3" viewBox="0 0 71 3"><path d="M0 2L1.0 0.5L2.0 2L3.0 0.5L4.0 2L5.0 0.5L6.0 2L7.0 0.5L8.0 2L9.0 0.5L10.0 2L11.0 0.5L12.0 2L13.0 0.5L14.0 2L15.0 0.5L16.0 2L17.0 0.5L18.0 2L19.0 0.5L20.0 2L21.0 0.5L22.0 2L23.0 0.5L24.0 2L25.0 0.5L26.0 2L27.0 0.5L28.0 2L29.0 0.5L30.0 2L31.0 0.5L32.0 2L33.0 0.5L34.0 2L35.0 0.5L36.0 2L37.0 0.5L38.0 2L39.0 0.5L40.0 2L41.0 0.5L42.0 2L43.0 0.5L44.0 2L45.0 0.5L46.0 2L47.0 0.5L48.0 2L49.0 0.5L50.0 2L51.0 0.5L52.0 2L53.0 0.5L54.0 2L55.0 0.5L56.0 2L57.0 0.5L58.0 2L59.0 0.5L60.0 2L61.0 0.5L62.0 2L63.0 0.5L64.0 2L65.0 0.5L66.0 2L67.0 0.5L68.0 2L69.0 0.5L70.0 2" stroke="#5E8A5E" stroke-width="0.9" fill="none"/></svg>
<div class="a" style="left:400px;top:124px;width:1px;height:12px;background:#BBBBBB;"></div>
<div class="a" style="left:133px;top:302px;width:886px;height:19px;background:#313335;"></div>
<div class="a" style="left:18px;top:320px;width:115px;height:1px;background:#2D2F31;"></div>
<div class="a" style="left:133px;top:321px;width:886px;height:0.5px;background:#313335;"></div>
<div class="t ui" style="left:23px;top:329px;">Run:</div>
<svg class="a" style="left:56px;top:326px;" width="12" height="12" viewBox="0 0 12 12"><g transform="scale(0.96)"><path d="M6 0.5C3.6 0.5 3.3 1.3 3.3 2.3V3.6H6.2V4.1H2.1C1 4.1 0.3 5 0.3 6.3C0.3 7.7 1 8.4 2.1 8.4H3.1V7C3.1 5.9 4 5.1 5 5.1H7.7C8.5 5.1 9 4.6 9 3.8V2.3C9 1.3 8.2 0.5 6 0.5Z" fill="#4E86B8"/><path d="M6 11.5C8.4 11.5 8.7 10.7 8.7 9.7V8.4H5.8V7.9H9.9C11 7.9 11.7 7 11.7 5.7C11.7 4.3 11 3.6 9.9 3.6H8.9V5C8.9 6.1 8 6.9 7 6.9H4.3C3.5 6.9 3 7.4 3 8.2V9.7C3 10.7 3.8 11.5 6 11.5Z" fill="#C9AE45"/></g></svg>
<div class="t ui" style="left:72px;top:329px;">Vehicle_Testing</div>
<svg class="a" style="left:140px;top:330px;" width="6" height="6" viewBox="0 0 6 6"><path d="M0.3 0.3L5.7 5.7M5.7 0.3L0.3 5.7" stroke="#7F8285" stroke-width="0.9"/></svg>
<div class="a" style="left:46px;top:341px;width:109px;height:2px;background:#8E9092;"></div>
<svg class="a" style="left:771px;top:326px;" width="11" height="11" viewBox="0 0 11 11"><polygon points="10.87,6.03 10.67,7.07 8.83,7.28 8.42,7.90 8.93,9.67 8.05,10.26 6.60,9.12 5.87,9.26 4.97,10.87 3.93,10.67 3.72,8.83 3.10,8.42 1.33,8.93 0.74,8.05 1.88,6.60 1.74,5.87 0.13,4.97 0.33,3.93 2.17,3.72 2.58,3.10 2.07,1.33 2.95,0.74 4.40,1.88 5.13,1.74 6.03,0.13 7.07,0.33 7.28,2.17 7.90,2.58 9.67,2.07 10.26,2.95 9.12,4.40 9.26,5.13" fill="#C8C8C8" stroke="#C8C8C8" stroke-width="0.5" stroke-linejoin="round"/><circle cx="5.5" cy="5.5" r="1.9" fill="#3C3F41"/></svg>
<div class="a" style="left:792px;top:331px;width:10px;height:1.5px;background:#C8C8C8;"></div>
<div class="a" style="left:40px;top:342px;width:1px;height:197px;background:#38393B;"></div>
<div class="a" style="left:63px;top:342px;width:744px;height:197px;background:#2B2B2B;"></div>
<svg class="a" style="left:25px;top:349px;" width="8" height="10" viewBox="0 0 8 10"><path d="M0 0L8.2 4.8L0 9.6Z" fill="#499C54"/></svg>
<svg class="a" style="left:22px;top:367px;" width="14" height="14" viewBox="0 0 14 14"><path d="M2.3 11.7L7.3 6.7" stroke="#AFB1B3" stroke-width="2.4" stroke-linecap="round"/><path d="M11.67 4.75A2.2 2.2 0 1 1 10.25 2.93" stroke="#AFB1B3" stroke-width="2" fill="none"/></svg>
<div class="a" style="left:21px;top:388px;width:16px;height:1px;background:#515151;"></div>
<div class="a" style="left:25px;top:397px;width:8px;height:8px;background:#595B5D;"></div>
<div class="a" style="left:21px;top:414px;width:16px;height:1px;background:#515151;"></div>
<svg class="a" style="left:24px;top:423px;" width="10" height="9" viewBox="0 0 10 9"><rect x="0" y="0" width="6" height="4.3" fill="#AFB1B3"/><rect x="6.8" y="0" width="3.2" height="4.3" fill="#AFB1B3"/><rect x="0" y="5" width="10" height="4" fill="#AFB1B3"/></svg>
<div class="a" style="left:21px;top:440px;width:16px;height:1px;background:#515151;"></div>
<svg class="a" style="left:23px;top:448px;" width="12" height="12" viewBox="0 0 12 12"><path d="M7.2 0.6L11.4 4.8L9.8 6.4L5.6 2.2Z" fill="#AFB1B3"/><path d="M6.4 2.6L9.4 5.6L8.4 9.6L2.4 3.6Z" fill="#AFB1B3"/><path d="M5.2 6.8L0.6 11.4" stroke="#AFB1B3" stroke-width="1.3"/></svg>
<svg class="a" style="left:47px;top:350px;" width="10" height="11" viewBox="0 0 10 11"><path d="M5 10.5V1.5M1 5.2L5 1.2L9 5.2" stroke="#AFB1B3" stroke-width="1.5" fill="none"/></svg>
<svg class="a" style="left:47px;top:370px;" width="10" height="11" viewBox="0 0 10 11"><path d="M5 0.5V9.5M1 5.8L5 9.8L9 5.8" stroke="#AFB1B3" stroke-width="1.5" fill="none"/></svg>
<svg class="a" style="left:47px;top:392px;" width="11" height="11" viewBox="0 0 11 11"><path d="M0 1H10M0 4.5H8.5Q10.5 4.5 10.5 6.5Q10.5 8.5 8.5 8.5H6" stroke="#AFB1B3" stroke-width="1.3" fill="none"/><path d="M6.5 6.5L4.5 8.5L6.5 10.5" stroke="#AFB1B3" stroke-width="1.2" fill="none"/><path d="M0 8.5H3" stroke="#AFB1B3" stroke-width="1.3"/></svg>
<div class="a" style="left:43px;top:408px;width:18px;height:18px;background:#4C5052;border-radius:3px"></div>
<svg class="a" style="left:47px;top:412px;" width="11" height="10" viewBox="0 0 11 10"><path d="M0 1H3.5M0 4.5H3.5M0 9H10.5" stroke="#AFB1B3" stroke-width="1.3"/><path d="M7 0V6.5M4.8 4.5L7 6.8L9.2 4.5" stroke="#AFB1B3" stroke-width="1.3" fill="none"/></svg>
<svg class="a" style="left:46px;top:433px;" width="12" height="11" viewBox="0 0 12 11"><rect x="2.5" y="0" width="7" height="3" fill="#AFB1B3"/><rect x="0" y="3.5" width="12" height="5" rx="1" fill="#AFB1B3"/><rect x="2.5" y="7" width="7" height="4" fill="#AFB1B3" stroke="#3C3F41" stroke-width="0.8"/></svg>
<svg class="a" style="left:48px;top:453px;" width="9" height="11" viewBox="0 0 9 11"><rect x="0" y="1.2" width="9" height="1.5" fill="#AFB1B3"/><rect x="3" y="0" width="3" height="1.5" fill="#AFB1B3"/><path d="M1 3.5H8L7.3 10.5H1.7Z" fill="#AFB1B3"/></svg>
<div class="a" style="left:63px;top:342px;width:743px;height:197px;overflow:hidden"><div class="m er" style="position:absolute;left:10px;top:3px;line-height:17.5px"><span style="color:#BBBBBB">"C:\Users\obiak\Sumo\USA Road Network SUMO_2021\venv\Scripts\python.exe" "C:/Users/obiak/Sumo/USA Road Network SUMO_2021/Vehicle_Testing.py"</span>
C:\Program Files (x86)\Eclipse\Sumo\tools\traci\main.py:174: UserWarning: Could not connect to TraCI server using port 60000 (x)
  warnings.warn(("Could not connect to TraCI server using port %s (%s)." +
C:\Program Files (x86)\Eclipse\Sumo\tools\traci\main.py:174: UserWarning: Could not connect to TraCI server using port 60000 (x)
  warnings.warn(("Could not connect to TraCI server using port %s (%s)." +
C:\Program Files (x86)\Eclipse\Sumo\tools\traci\main.py:174: UserWarning: Could not connect to TraCI server using port 60000 (x)
  warnings.warn(("Could not connect to TraCI server using port %s (%s)." +
Traceback (most recent call last):
  File "<span class="lk">C:\Program Files (x86)\Eclipse\Sumo\tools\traci\main.py</span>", line 116, in connect
    conn = Connection(host, port, proc)
  File "<span class="lk">C:\Program Files (x86)\Eclipse\Sumo\tools\traci\connection.py</span>", line 51, in __init__</div></div>
<div class="a" style="left:800px;top:344px;width:7px;height:73px;background:rgba(88,90,92,0.75);"></div>
<div class="a" style="left:74px;top:533px;width:440px;height:6px;background:#4B4D4E;"></div>
<div class="a" style="left:807px;top:321px;width:1px;height:218px;background:#2B2B2B;"></div>
<div class="t ui" style="left:813px;top:329px;">Event Log</div>
<svg class="a" style="left:984px;top:326px;" width="11" height="11" viewBox="0 0 11 11"><polygon points="10.87,6.03 10.67,7.07 8.83,7.28 8.42,7.90 8.93,9.67 8.05,10.26 6.60,9.12 5.87,9.26 4.97,10.87 3.93,10.67 3.72,8.83 3.10,8.42 1.33,8.93 0.74,8.05 1.88,6.60 1.74,5.87 0.13,4.97 0.33,3.93 2.17,3.72 2.58,3.10 2.07,1.33 2.95,0.74 4.40,1.88 5.13,1.74 6.03,0.13 7.07,0.33 7.28,2.17 7.90,2.58 9.67,2.07 10.26,2.95 9.12,4.40 9.26,5.13" fill="#C8C8C8" stroke="#C8C8C8" stroke-width="0.5" stroke-linejoin="round"/><circle cx="5.5" cy="5.5" r="1.9" fill="#3C3F41"/></svg>
<div class="a" style="left:1004px;top:331px;width:10px;height:1.5px;background:#C8C8C8;"></div>
<div class="a" style="left:830px;top:342px;width:189px;height:197px;background:#2B2B2B;"></div>
<svg class="a" style="left:814px;top:350px;" width="12" height="11" viewBox="0 0 12 11"><path d="M10 1.5V10.5H0.5V1.5H7" stroke="#5B5E60" stroke-width="1.1" fill="none"/><path d="M3 5L5 7L11 1" stroke="#5B5E60" stroke-width="1.2" fill="none"/></svg>
<svg class="a" style="left:815px;top:370px;" width="9" height="11" viewBox="0 0 9 11"><rect x="0" y="1.2" width="9" height="1.5" fill="#5B5E60"/><rect x="3" y="0" width="3" height="1.5" fill="#5B5E60"/><path d="M1 3.5H8L7.3 10.5H1.7Z" fill="#5B5E60"/></svg>
<div class="a" style="left:811px;top:389px;width:16px;height:1px;background:#515151;"></div>
<svg class="a" style="left:813px;top:395px;" width="14" height="14" viewBox="0 0 14 14"><path d="M2.3 11.7L7.3 6.7" stroke="#AFB1B3" stroke-width="2.4" stroke-linecap="round"/><path d="M11.67 4.75A2.2 2.2 0 1 1 10.25 2.93" stroke="#AFB1B3" stroke-width="2" fill="none"/></svg>
<div class="a" style="left:0px;top:539px;width:1019px;height:3px;background:#2B2B2B;"></div>
<div class="a" style="left:0px;top:542px;width:1019px;height:32px;background:#EEEEEE;"></div>
<div class="a" style="left:0px;top:574px;width:1019px;height:1px;background:#1A1A1A;"></div>
<svg class="a" style="left:12px;top:552px;" width="14" height="13" viewBox="0 0 14 13"><path d="M0 1.9L5.6 1.1V6.2H0Z M6.3 1L14 0V6.2H6.3Z M0 6.9H5.6V11.9L0 11.1Z M6.3 6.9H14V13L6.3 12Z" fill="#000"/></svg>
<div class="a" style="left:38px;top:542px;width:1px;height:32px;background:#D6D6D6;"></div>
<div class="a" style="left:39px;top:542px;width:272px;height:32px;background:#FFFFFF;"></div>
<div class="a" style="left:311px;top:542px;width:1px;height:32px;background:#D6D6D6;"></div>
<svg class="a" style="left:47px;top:551px;" width="14" height="14" viewBox="0 0 14 14"><circle cx="8.5" cy="5.5" r="4.5" fill="none" stroke="#222" stroke-width="1.2"/><path d="M5.3 8.7L0.8 13.2" stroke="#222" stroke-width="1.3"/></svg>
<div class="t" style="left:71px;top:552.5px;font-size:11.6px;line-height:11.6px;color:#222;letter-spacing:0.1px">Type here to search</div>
<svg class="a" style="left:325px;top:552px;" width="13" height="13" viewBox="0 0 13 13"><circle cx="6.5" cy="6.5" r="5.4" fill="none" stroke="#111" stroke-width="1.8"/></svg>
<svg class="a" style="left:362px;top:552px;" width="15" height="13" viewBox="0 0 15 13"><rect x="2.5" y="3" width="7" height="7" fill="none" stroke="#333" stroke-width="1.2"/><path d="M0 0.6H9M0 12.4H9" stroke="#333" stroke-width="1.2"/><path d="M13.5 0V1.8M13.5 3.5V13" stroke="#333" stroke-width="1.4"/></svg>
<svg class="a" style="left:400px;top:548px;" width="20" height="20" viewBox="0 0 20 20"><defs><linearGradient id="eg1" x1="0" y1="0" x2="1" y2="0.3"><stop offset="0" stop-color="#0C59A4"/><stop offset="1" stop-color="#114A8B"/></linearGradient><linearGradient id="eg2" x1="0" y1="0" x2="1" y2="1"><stop offset="0" stop-color="#1B9DE2"/><stop offset="0.6" stop-color="#35C1F1"/><stop offset="1" stop-color="#66EB6E"/></linearGradient></defs><path d="M10 0.3C15.5 0.3 19.7 4.2 19.7 9.2C19.7 12.3 17.2 14.3 14.2 14.3C11.4 14.3 10 12.8 10 11.2C10 9.7 11.4 9.3 12.6 9.3C11.8 7.4 10.3 6.3 8 6.3C4.6 6.3 2.2 9.2 2.2 12.2C2.2 16 5.5 19.7 10.3 19.7C4.5 19.7 0.3 15.3 0.3 10C0.3 4.5 4.5 0.3 10 0.3Z" fill="url(#eg2)"/><path d="M2.2 12.2C2.2 16 5.5 19.7 10.3 19.7C13.4 19.7 15.8 18.6 17.4 16.9C16 17.5 14.7 17.6 13.4 17.5C9.5 17.2 7.4 15 7.4 12.3C7.4 10.6 8.4 9.2 9.6 8.5C9.1 7.3 8.4 6.3 8 6.3C4.6 6.3 2.2 9.2 2.2 12.2Z" fill="url(#eg1)"/></svg>
<svg class="a" style="left:441px;top:551px;" width="18" height="14" viewBox="0 0 18 14"><path d="M0 0H6.5L8 1.6H18V14H0Z" fill="#E8A317"/><rect x="0" y="3" width="18" height="11" fill="#FFCD4A"/><path d="M4 8H14V14H11.5V10.3H6.5V14H4Z" fill="#1F83D6"/></svg>
<svg class="a" style="left:480px;top:549px;" width="20" height="18" viewBox="0 0 20 18"><path d="M0 6L10 0L20 6V17.5H0Z" fill="#0F63C7"/><path d="M2.5 5H17.5V9L10 12.5L2.5 9Z" fill="#F5F5F5"/><path d="M0 6.5L10 12L20 6.5V17.5H0Z" fill="#2AA4F4"/><path d="M0 17.5L10 11L20 17.5Z" fill="#40B9F8"/></svg>
<svg class="a" style="left:520px;top:548px;" width="19" height="20" viewBox="0 0 19 20"><path d="M5.5 5V2.5Q5.5 0.8 7.3 0.8H11.7Q13.5 0.8 13.5 2.5V5" fill="none" stroke="#2B2B2B" stroke-width="1.6"/><rect x="0" y="4.5" width="19" height="15" rx="1.2" fill="#2F2F2F"/><rect x="5.6" y="9" width="3.6" height="3.6" fill="#F25022"/><rect x="9.9" y="9" width="3.6" height="3.6" fill="#7FBA00"/><rect x="5.6" y="13.3" width="3.6" height="3.6" fill="#00A4EF"/><rect x="9.9" y="13.3" width="3.6" height="3.6" fill="#FFB900"/></svg>
<svg class="a" style="left:560px;top:549px;" width="19" height="19" viewBox="0 0 19 19"><rect x="0" y="0" width="19" height="19" rx="1.5" fill="#107C10"/><circle cx="9.5" cy="9.7" r="7.3" fill="#FFFFFF"/><path d="M4.2 4.3Q9.5 7.5 14.8 4.3L14.8 6Q9.5 9.5 4.2 6Z" fill="#107C10"/><path d="M3 15Q6.5 9.5 9.5 7.5Q12.5 9.5 16 15L13.8 16.8Q11.5 12.5 9.5 11Q7.5 12.5 5.2 16.8Z" fill="#107C10"/></svg>
<div class="a" style="left:590px;top:542px;width:39px;height:32px;background:#FAB583;"></div>
<div class="a" style="left:630px;top:542px;width:39px;height:32px;background:#FAB583;"></div>
<div class="a" style="left:590px;top:572px;width:39px;height:2px;background:#F7630C;"></div>
<div class="a" style="left:630px;top:572px;width:39px;height:2px;background:#F7630C;"></div>
<svg class="a" style="left:601px;top:550px;" width="17" height="17" viewBox="0 0 17 17"><rect x="0" y="0" width="17" height="17" rx="0.8" fill="#323232"/><path d="M17 8.5V17H8.5Z" fill="#FFD900"/></svg>
<svg class="a" style="left:639px;top:549px;" width="20" height="18" viewBox="0 0 20 18"><circle cx="15.5" cy="4" r="2.6" fill="#7B83EB"/><rect x="12.5" y="7.5" width="7" height="8" rx="3" fill="#7B83EB"/><circle cx="10" cy="3.2" r="3.2" fill="#5059C9"/><path d="M5 7H15V13Q15 18 10 18Q5 18 5 13Z" fill="#5B5FC7"/><rect x="0" y="4.5" width="10" height="10" rx="1" fill="#4B53BC"/><path d="M2.2 6.9H7.8M5 6.9V12.6" stroke="#FFF" stroke-width="1.6"/></svg>
<div class="a" style="left:669px;top:542px;width:40px;height:32px;background:#F7F7F7;"></div>
<div class="a" style="left:669px;top:572px;width:40px;height:2px;background:#0078D7;"></div>
<svg class="a" style="left:681px;top:550px;" width="16" height="16" viewBox="0 0 16 16"><defs><linearGradient id="pcg2" x1="0" y1="0" x2="1" y2="1"><stop offset="0" stop-color="#21D789"/><stop offset="0.45" stop-color="#FCF84A"/><stop offset="1" stop-color="#FCF84A"/></linearGradient></defs><rect x="0" y="0" width="16" height="16" fill="url(#pcg2)"/><rect x="2" y="2" width="12" height="12" fill="#000"/><text x="3" y="8.3" font-family="Liberation Sans" font-weight="bold" font-size="6.2" fill="#fff">PC</text><rect x="3.3" y="10.8" width="4.4" height="1" fill="#fff"/></svg>
<svg class="a" style="left:792px;top:553px;" width="11" height="7" viewBox="0 0 11 7"><path d="M0.5 6L5.5 1L10.5 6" stroke="#222" stroke-width="1.1" fill="none"/></svg>
<svg class="a" style="left:811px;top:551px;" width="11" height="14" viewBox="0 0 11 14"><rect x="1.3" y="3.8" width="5.6" height="6.4" rx="0.8" fill="none" stroke="#555" stroke-width="0.9"/><path d="M6.9 5.8L10 4.3V9.7L6.9 8.2" fill="none" stroke="#555" stroke-width="0.9"/><path d="M1 2.2Q4.5 0.6 8 2.2M1 11.8Q4.5 13.4 8 11.8" stroke="#777" stroke-width="0.8" fill="none"/></svg>
<svg class="a" style="left:829px;top:553px;" width="14" height="9" viewBox="0 0 14 9"><defs><linearGradient id="odg" x1="0" y1="0" x2="0" y2="1"><stop offset="0" stop-color="#777"/><stop offset="1" stop-color="#C8C8C8"/></linearGradient></defs><path d="M3.5 8.5Q0.5 8.5 0.5 6.2Q0.5 4 3 4Q3.8 0.8 7 0.8Q10.2 0.8 10.8 3.8Q13.5 4 13.5 6.3Q13.5 8.5 11 8.5Z" fill="url(#odg)" stroke="#333" stroke-width="0.9"/></svg>
<svg class="a" style="left:848px;top:554px;" width="14" height="8" viewBox="0 0 14 8"><rect x="0.5" y="0.5" width="12" height="7" fill="#F4F4F4" stroke="#333" stroke-width="0.9"/><rect x="1.3" y="1.3" width="2.4" height="5.4" fill="#111"/><rect x="12.6" y="2.3" width="1.2" height="3.4" fill="#555"/></svg>
<svg class="a" style="left:867px;top:552px;" width="13" height="12" viewBox="0 0 13 12"><path d="M0.5 4H3L6.5 0.8V11.2L3 8H0.5Z" fill="none" stroke="#444" stroke-width="0.9"/><path d="M8.3 3.8Q9.5 6 8.3 8.2M10.2 2.3Q12 6 10.2 9.7" stroke="#555" stroke-width="0.8" fill="none"/></svg>
<svg class="a" style="left:886px;top:552px;" width="15" height="14" viewBox="0 0 15 14"><path d="M3.2 0L6.2 2L3.2 4L0.2 2Z M9.2 0L12.2 2L9.2 4L6.2 2Z M3.2 4L6.2 6L3.2 8L0.2 6Z M9.2 4L12.2 6L9.2 8L6.2 6Z M3.2 8.8L6.2 6.8L9.2 8.8L6.2 10.8Z" fill="#111"/><circle cx="10.5" cy="10" r="3.6" fill="#E81123"/><path d="M9.2 8.7L11.8 11.3M11.8 8.7L9.2 11.3" stroke="#FFF" stroke-width="1"/></svg>
<svg class="a" style="left:907px;top:553px;" width="11" height="10" viewBox="0 0 11 10"><path d="M1 9.5Q1 1 9.5 1M3.5 9.5Q3.5 3.5 9.5 3.5M6 9.5Q6 6 9.5 6" stroke="#888" stroke-width="1" fill="none"/><circle cx="9" cy="9" r="1" fill="#222"/></svg>
<div class="t" style="left:931px;top:546.5px;font-size:10.3px;line-height:10px;color:#222;letter-spacing:-0.45px">4:31 PM</div>
<div class="t" style="left:927px;top:561.5px;font-size:10.3px;line-height:10px;color:#222;letter-spacing:-0.35px">10/6/2021</div>
<svg class="a" style="left:985px;top:551px;" width="21" height="20" viewBox="0 0 21 20"><path d="M1 1H14V10.5H6.5L3.5 13.5V10.5H1Z" fill="#000"/><path d="M3.2 3.6H11.8M3.2 5.6H11.8M3.2 7.6H9" stroke="#BBB" stroke-width="0.7"/><circle cx="13.8" cy="12.8" r="5.6" fill="#E4E4E4" stroke="#A0A0A0" stroke-width="0.9"/><path d="M12.6 10.6L14.2 9.6V16" stroke="#222" stroke-width="1.5" fill="none"/></svg>
<div class="a" style="left:1015px;top:542px;width:1px;height:32px;background:#C4C4C4;"></div>
</body></html>
